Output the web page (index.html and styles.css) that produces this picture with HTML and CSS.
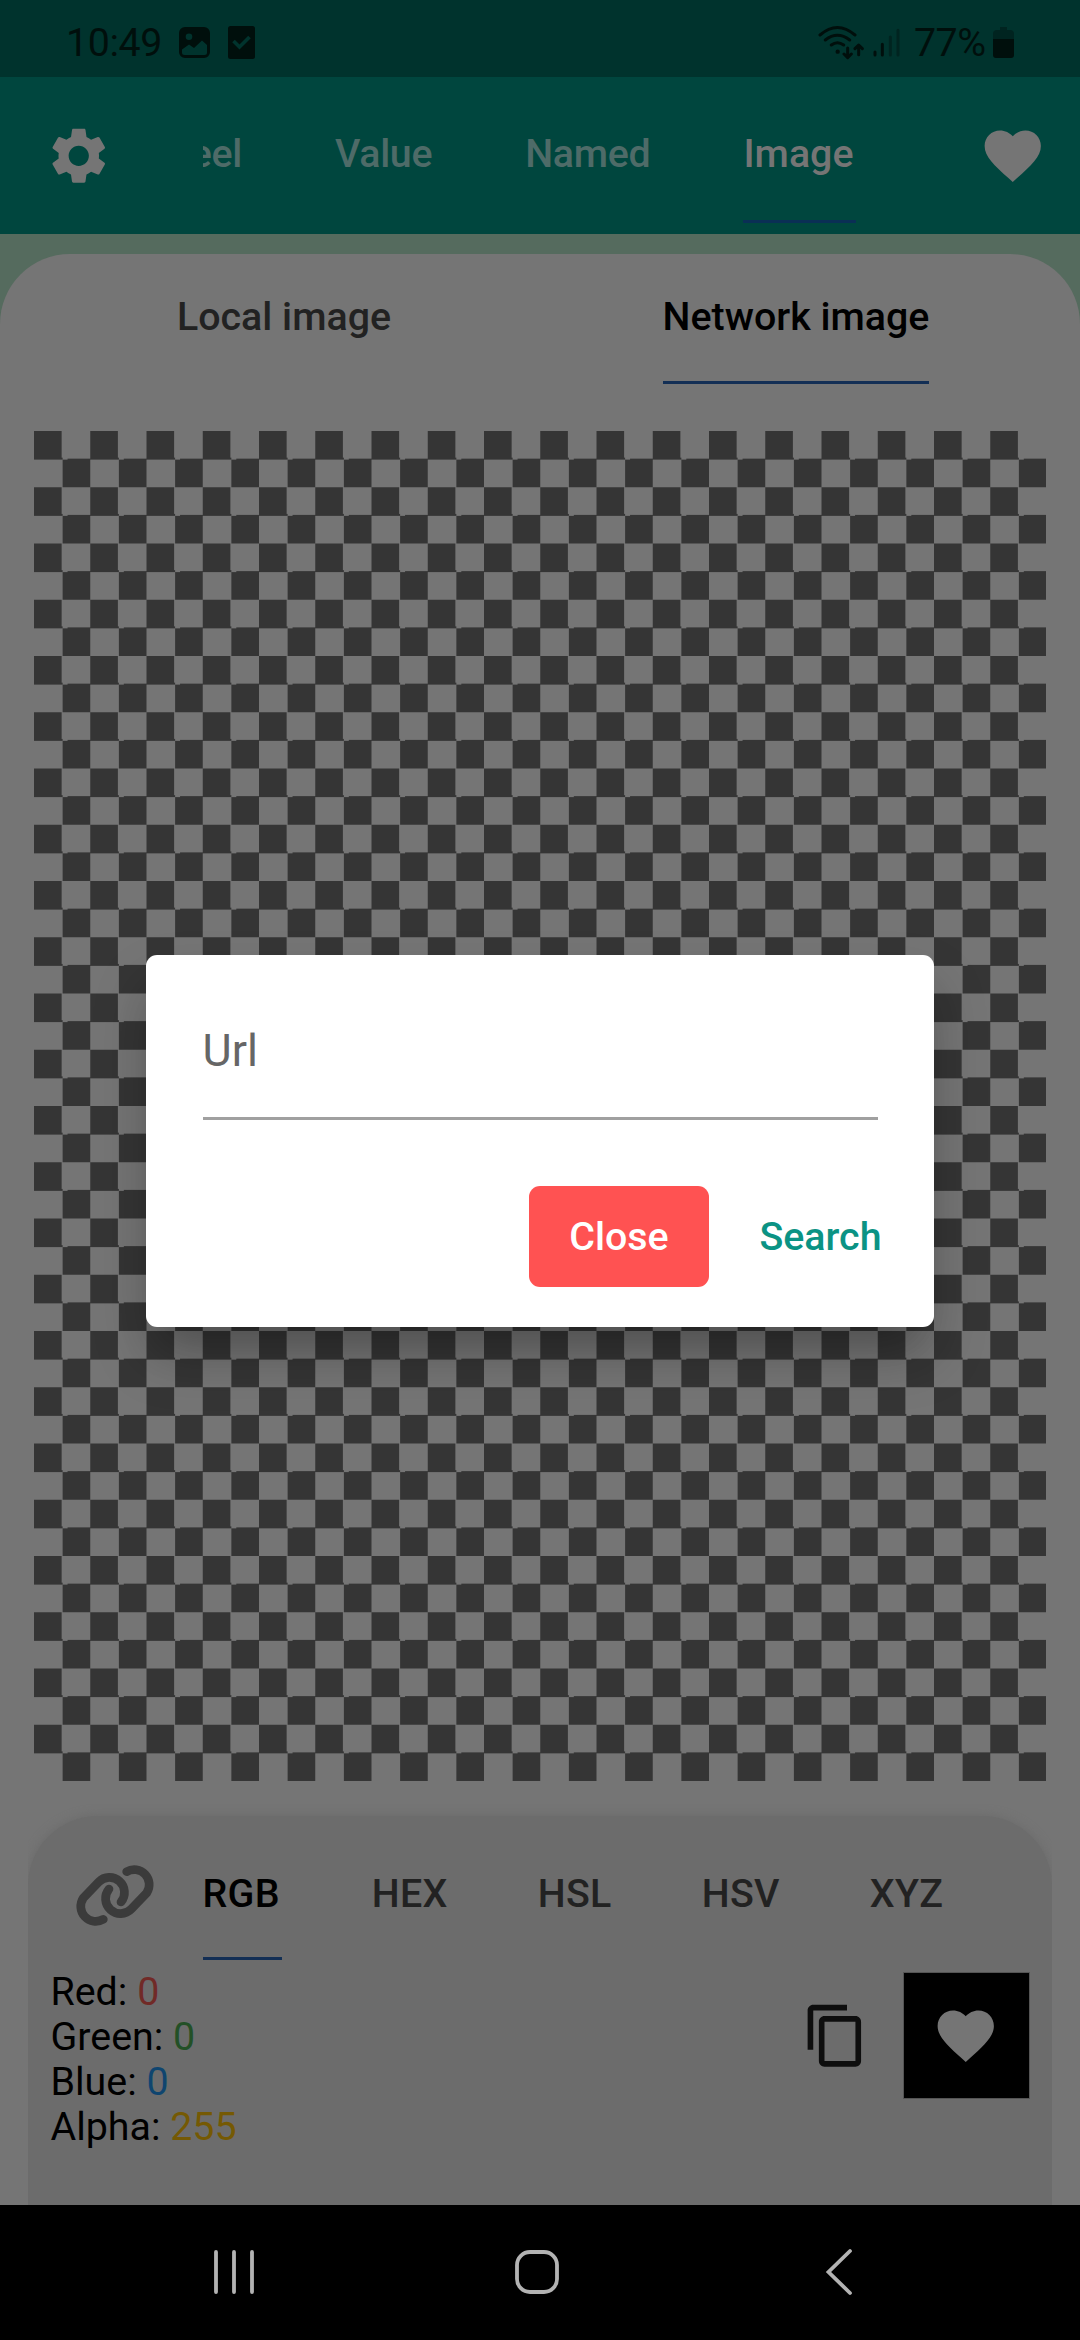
FILE: index.html
```html
<!DOCTYPE html>
<html lang="en">
<head>
<meta charset="utf-8">
<title>Color picker</title>
<link rel="stylesheet" href="styles.css">
</head>
<body>
<div class="screen">
  <div class="status">
    <span class="time">10:49</span>
    <svg class="pic" viewBox="0 0 31 31" width="31" height="31"><path fill-rule="evenodd" d="M6 0h19a6 6 0 0 1 6 6v19a6 6 0 0 1-6 6H6a6 6 0 0 1-6-6V6a6 6 0 0 1 6-6zM10 6.500a3.300 3.300 0 1 0 0 6.600 3.300 3.300 0 0 0 0-6.600zM3 22.500v3a2.500 2.500 0 0 0 2.500 2.500h20a2.500 2.500 0 0 0 2.500-2.500V18l-5-4.500-8 7.500-5-3.500z"/></svg>
    <svg class="task" viewBox="0 0 27 33" width="27" height="33"><rect width="27" height="33" rx="2.500"/><path class="tick" d="M5.500 15l6 6 10-10"/></svg>
    <span class="grow"></span>
    <svg class="signal" viewBox="24 15 252 105" width="84" height="35">
      <g class="arcs"><path d="M30 45Q82 0 135 45M46 60Q82 32 119 60M64 75Q82 61 101 75M113 84v27M102 102l11 11 11-11M146 104V77M135 86l11-11 11 11"/><circle class="dot" cx="83" cy="95" r="6.500"/></g>
      <path class="bar" d="M195 96v9M217 73v32"/><path class="bar dim" d="M241 51v54M264 31v74"/>
    </svg>
    <span class="level">77%</span>
    <svg class="battery" viewBox="0 0 21 31" width="21" height="31"><path class="empty" d="M7 0h7v3h3a4 4 0 0 1 4 4v6H0V7a4 4 0 0 1 4-4h3z"/><path d="M0 12h21v16a3 3 0 0 1-3 3H3a3 3 0 0 1-3-3z"/></svg>
  </div>

  <header class="appbar">
    <div class="center"><svg class="icon" viewBox="0 0 24 24"><path d="M19.140 12.940c.04-.3.06-.61.06-.94 0-.32-.02-.64-.07-.94l2.030-1.580c.18-.14.23-.41.12-.61l-1.920-3.320c-.12-.22-.37-.29-.59-.22l-2.390.96c-.5-.38-1.030-.7-1.620-.94L14.400 2.810c-.04-.24-.24-.41-.48-.41h-3.840c-.24 0-.43.17-.47.41L9.250 5.350C8.660 5.590 8.120 5.920 7.630 6.290L5.240 5.330c-.22-.08-.47 0-.59.22L2.740 8.870c-.12.21-.08.47.12.61l2.030 1.580c-.05.3-.09.63-.09.94s.02.64.07.94l-2.030 1.580c-.18.14-.23.41-.12.61l1.920 3.320c.12.22.37.29.59.22l2.390-.96c.5.38 1.030.7 1.620.94l.36 2.540c.05.24.24.41.48.41h3.840c.24 0 .44-.17.47-.41l.36-2.540c.59-.24 1.130-.56 1.620-.94l2.390.96c.22.08.47 0 .59-.22l1.920-3.320c.12-.22.07-.47-.12-.61zM12 15.600c-1.980 0-3.600-1.620-3.600-3.600s1.620-3.600 3.600-3.600 3.600 1.620 3.600 3.600-1.620 3.600-3.600 3.600z"/></svg></div>
    <nav class="tabs main-tabs">
      <span class="tab">Wheel</span><span class="tab">Value</span><span class="tab">Named</span><span class="tab active">Image</span>
    </nav>
    <div class="center"><svg class="icon" viewBox="0 0 24 24"><path d="M12 21.350l-1.450-1.320C5.400 15.360 2 12.280 2 8.500 2 5.420 4.420 3 7.500 3c1.740 0 3.410.81 4.500 2.090C13.090 3.810 14.760 3 16.500 3 19.580 3 22 5.420 22 8.500c0 3.780-3.400 6.860-8.550 11.540z"/></svg></div>
  </header>

  <main class="sheet">
    <nav class="tabs source-tabs">
      <span class="tab">Local image</span><span class="tab active">Network image</span>
    </nav>
    <div class="canvas"></div>
    <section class="panel">
      <div class="panel-head">
        <svg class="link" viewBox="0 0 300 270" width="100" height="90"><path d="M115 208A45 45 0 0 1 55 144L101 96A45 45 0 0 1 168 156M185 65A45 45 0 0 1 245 129L199 177A45 45 0 0 1 132 117"/></svg>
        <nav class="tabs model-tabs">
          <span class="tab active">RGB</span><span class="tab">HEX</span><span class="tab">HSL</span><span class="tab">HSV</span><span class="tab">XYZ</span>
        </nav>
      </div>
      <div class="values">
        <div class="list">
          <div>Red: <span class="red">0</span></div>
          <div>Green: <span class="green">0</span></div>
          <div>Blue: <span class="blue">0</span></div>
          <div>Alpha: <span class="amber">255</span></div>
        </div>
        <svg class="icon copy" viewBox="0 0 24 24"><path d="M16 1H4c-1.100 0-2 .9-2 2v14h2V3h12zm3 4H8c-1.100 0-2 .9-2 2v14c0 1.100.9 2 2 2h11c1.100 0 2-.9 2-2V7c0-1.100-.9-2-2-2zm0 16H8V7h11z"/></svg>
        <div class="swatch center"><svg class="icon" viewBox="0 0 24 24"><path d="M12 21.350l-1.450-1.320C5.400 15.360 2 12.280 2 8.500 2 5.420 4.420 3 7.500 3c1.740 0 3.410.81 4.500 2.090C13.090 3.810 14.760 3 16.500 3 19.580 3 22 5.420 22 8.500c0 3.780-3.400 6.860-8.550 11.540z"/></svg></div>
      </div>
    </section>
  </main>

  <footer class="navbar">
    <svg viewBox="0 0 60 60" width="60" height="60"><path d="M12 10v40M30 10v40M48 10v40"/></svg>
    <svg viewBox="0 0 60 60" width="60" height="60"><rect x="10" y="10" width="40" height="40" rx="13"/></svg>
    <svg viewBox="0 0 60 60" width="60" height="60"><path d="M41 9L19.500 30 41 51"/></svg>
  </footer>

  <div class="overlay">
    <div class="dialog">
      <div class="field">Url</div>
      <div class="actions">
        <span class="close">Close</span>
        <span class="search">Search</span>
      </div>
    </div>
  </div>
</div>
</body>
</html>
```

FILE: styles.css
```css
* { box-sizing: border-box; }
body { margin: 0; background: #000; }
svg { display: block; flex: none; }

.screen {
  position: relative;
  display: flex;
  flex-direction: column;
  width: 1080px;
  height: 2340px;
  overflow: hidden;
  background: #556b5e;
  font-family: Roboto, sans-serif;
  font-size: 39.375px;
  line-height: 45px;
  white-space: nowrap;
}
.center { display: flex; align-items: center; justify-content: center; }
.icon { width: 67.5px; height: 67.5px; fill: #757575; }

/* Status bar */
.status {
  display: flex;
  align-items: flex-start;
  flex: none;
  height: 77px;
  padding: 20px 66px 0 66px;
  background: #00332d;
  color: #000f0c;
  fill: #000f0c;
}
.time { width: 113px; letter-spacing: -0.4px; }
.pic { margin-top: 7px; }
.task { margin: 6px 0 0 18px; }
.tick { fill: none; stroke: #00332d; stroke-width: 3.6; }
.grow { flex: 1; }
.signal { margin-top: 5px; }
.arcs { fill: none; stroke: #000f0c; stroke-width: 9; stroke-linecap: round; stroke-linejoin: round; }
.dot { fill: #000f0c; stroke: none; }
.bar { stroke: #000f0c; stroke-width: 9; stroke-linecap: round; }
.dim { stroke: #002420; }
.level { width: 91px; padding-left: 12px; letter-spacing: -0.5px; }
.battery { margin-top: 7px; }
.empty { fill: #002420; }

/* Tabs */
.tabs { display: flex; color: #222; font-weight: 500; }
.tab { flex: none; border-bottom: 3px solid transparent; }
.active { color: #000; border-color: #132f55; }

.appbar {
  display: grid;
  grid-template-columns: 157.5px 697.5px 135px;
  column-gap: 45px;
  flex: none;
  height: 157px;
  background: #00463e;
}
.main-tabs {
  justify-content: flex-end;
  gap: 93px;
  height: 146px;
  padding-right: 44.5px;
  overflow: hidden;
  color: #4e6b68;
  letter-spacing: -0.3px;
}
.main-tabs .tab { padding-top: 53.5px; }
.main-tabs .active { padding-right: 2px; color: #757575; border-color: #0a2f55; letter-spacing: 0; }

.sheet {
  flex: 1;
  display: flex;
  flex-direction: column;
  margin-top: 20px;
  padding: 0 28px;
  background: #757575;
  border-radius: 70px 70px 0 0;
}
.source-tabs {
  display: grid;
  grid-template-columns: 1fr 1fr;
  justify-items: center;
  height: 130px;
}
.source-tabs .tab { padding-top: 40px; }

.canvas {
  flex: none;
  width: 1012.5px;
  height: 1350px;
  margin: 47px 0 35px 5.75px;
  background: repeating-conic-gradient(#757575 0 25%, #353535 0 50%) 0 0 / 56.25px 56.25px;
}

.panel {
  flex: 1;
  background: #6c6c6c;
  border-radius: 70px 70px 0 0;
  box-shadow: 0 0 10px 1px #6c6c6c;
  clip-path: inset(-14px 0 0 0);
}
.panel-head { display: flex; align-items: flex-start; height: 153px; padding-left: 37px; }
.link { margin: 34px 37.5px 0 0; fill: none; stroke: #3b3b3b; stroke-width: 26; stroke-linecap: round; }
.model-tabs { gap: 90px; height: 144px; letter-spacing: 0.3px; }
.model-tabs .tab { padding-top: 54.5px; }
.model-tabs .active { padding-right: 2px; }

.values { display: flex; align-items: flex-start; padding: 0 22.5px; }
.list { flex: 1; color: #000; }
.red { color: #712a27; }
.green { color: #235026; }
.blue { color: #0f456f; }
.amber { color: #755903; }
.copy { margin: 32.5px 33px 0 0; fill: #0e0e0e; }
.swatch { width: 127px; height: 127px; margin-top: 3px; background: #000; outline: 1px solid #545454; outline-offset: -1px; }

/* System navigation */
.navbar {
  display: flex;
  align-items: center;
  gap: 242.5px;
  flex: none;
  height: 135px;
  padding: 0 0 2px 204px;
  background: #000;
  fill: none;
  stroke: #b3b3b3;
  stroke-width: 3.8;
  stroke-linecap: round;
}

/* Dialog */
.overlay {
  position: absolute;
  inset: 77px 0 135px;
  display: flex;
  align-items: center;
  justify-content: center;
}
.dialog {
  width: 788px;
  height: 372px;
  padding: 56px 37px 39px 56.5px;
  border-radius: 11px;
  background: #fff;
  box-shadow: 0 31px 42px -18px rgba(0, 0, 0, .2), 0 30px 56px 0 rgba(0, 0, 0, .18);
}
.field {
  width: 675px;
  height: 109px;
  padding-top: 17px;
  border-bottom: 3px solid #a0a0a0;
  color: #666;
  font-size: 45px;
  line-height: 45px;
}
.actions {
  display: flex;
  justify-content: flex-end;
  margin-top: 66px;
  font-weight: 500;
  line-height: 102px;
}
.close { width: 180px; height: 101px; margin-right: 35px; border-radius: 11px; background: #ff5252; color: #fff; text-align: center; }
.search { width: 153px; color: #0b9384; text-align: center; }
```
